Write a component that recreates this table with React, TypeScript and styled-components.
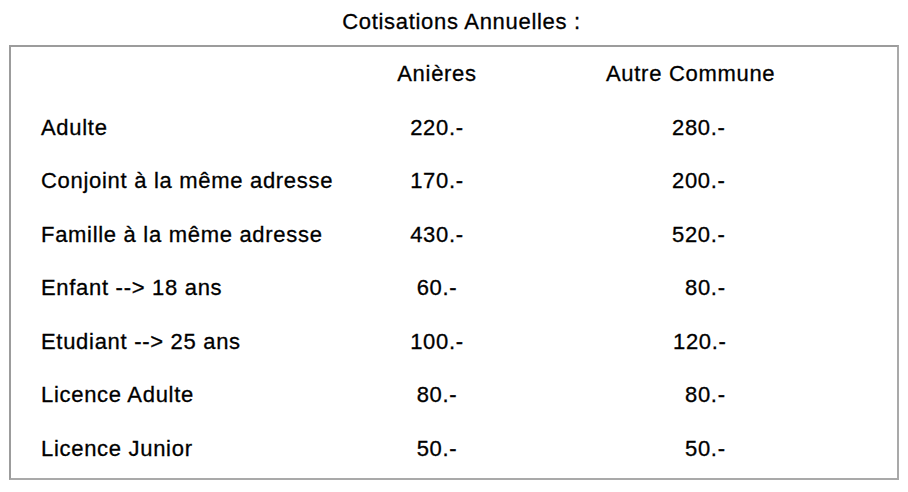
import React from "react";
import styled, { createGlobalStyle } from "styled-components";

const Global = createGlobalStyle`
  html, body { margin: 0; padding: 0; background: #ffffff; }
  body {
    font-family: "Liberation Sans", Arial, sans-serif;
    color: #000000;
  }
`;

const Page = styled.div`
  width: 908px;
  display: flex;
  flex-direction: column;
`;

const Title = styled.h1`
  margin: 0;
  padding: 9px 0 0 15px;
  font-size: 22px;
  font-weight: 400;
  letter-spacing: 0.7px;
  line-height: 25px;
  text-align: center;
  -webkit-text-stroke: 0.3px #000;
`;

const Box = styled.div`
  margin: 11px 9px 0 9px;
  border: 2px solid #a9a9a9;
  border-top-color: #9c9c9c;
  border-left-color: #9c9c9c;
  padding: 0 0 3px 30px;
  display: flex;
  flex-direction: column;
`;

const Row = styled.div`
  height: 53.5px;
  display: grid;
  grid-template-columns: 346px 100px 1fr;
  align-items: center;
  font-size: 22px;
  letter-spacing: 0.7px;
  line-height: 25px;
  white-space: pre;
  -webkit-text-stroke: 0.3px #000;
`;

const Label = styled.div`
  text-align: left;
`;

const Center = styled.div`
  text-align: center;
`;

const Right = styled.div<{ $indent: number }>`
  text-align: left;
  padding-left: ${(p) => p.$indent}px;
`;

const rows: [string, string, string, number][] = [
  ["Adulte", "220.-", "280.-", 185],
  ["Conjoint à la même adresse", "170.-", "200.-", 185],
  ["Famille à la même adresse", "430.-", "520.-", 185],
  ["Enfant --> 18 ans", "60.-", "80.-", 198],
  ["Etudiant --> 25 ans", "100.-", "120.-", 186],
  ["Licence Adulte", "80.-", "80.-", 198],
  ["Licence Junior", "50.-", "50.-", 198],
];

export default function App() {
  return (
    <Page>
      <Global />
      <Title>Cotisations Annuelles :</Title>
      <Box>
        <Row>
          <Label />
          <Center>Anières</Center>
          <Right $indent={119}>Autre Commune</Right>
        </Row>
        {rows.map(([label, a, b, indent]) => (
          <Row key={label}>
            <Label>{label}</Label>
            <Center>{a}</Center>
            <Right $indent={indent}>{b}</Right>
          </Row>
        ))}
      </Box>
    </Page>
  );
}
